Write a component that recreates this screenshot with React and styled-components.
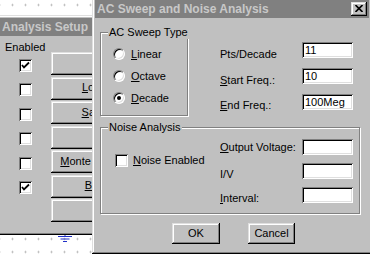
import React from "react";
import styled, { createGlobalStyle } from "styled-components";

const Global = createGlobalStyle`
  html, body { margin: 0; padding: 0; background: #fff; }
  body { font-family: "Liberation Sans", Arial, sans-serif; font-size: 11px; color: #000; }
`;

const Desktop = styled.div`
  position: relative;
  width: 370px;
  height: 254px;
  overflow: hidden;
  background-color: #fff;
  background-image: radial-gradient(circle, #a8a8a8 0.7px, transparent 1.2px);
  background-size: 13px 13px;
  background-position: 6px -1.5px;
`;

const raised = `
  box-shadow: inset -1px -1px #000, inset 1px 1px #dfdfdf, inset -2px -2px #808080, inset 2px 2px #fff;
`;

const Window = styled.div`
  position: absolute;
  left: ${(p) => p.$left}px;
  top: ${(p) => p.$top}px;
  width: ${(p) => p.$w}px;
  height: ${(p) => p.$h}px;
  box-sizing: border-box;
  padding: 3px;
  background: #c0c0c0;
  ${raised}
  display: flex;
  flex-direction: column;
`;

const TitleBar = styled.div`
  height: 18px;
  flex: 0 0 18px;
  background: #808080;
  display: flex;
  align-items: center;
  justify-content: space-between;
  padding: 0 2px 0 2px;
`;

const TitleText = styled.span`
  font-family: "Liberation Sans", Arial, sans-serif;
  font-weight: bold;
  font-size: 12px;
  color: #c8c8c8;
  white-space: nowrap;
  line-height: 18px;
`;

const CloseButton = styled.div`
  width: 16px;
  height: 14px;
  box-sizing: border-box;
  background: #c0c0c0;
  ${raised}
  display: flex;
  align-items: center;
  justify-content: center;
  padding-bottom: 1px;
`;

/* mnemonic text: first letter underlined */
const Text = styled.span`
  display: inline-block;
  line-height: 13px;
  white-space: nowrap;
  &::first-letter {
    text-decoration: ${(p) => (p.$u ? "underline" : "none")};
  }
`;

/* ---------- left window ---------- */

const LeftBody = styled.div`
  display: grid;
  grid-template-columns: 51px 148px;
  grid-template-rows: 14.5px;
  grid-auto-rows: 23px;
  row-gap: 1.5px;
`;

const Header = styled.div`
  grid-column: 1 / -1;
  padding: 5px 0 0 5px;
  line-height: 13px;
  white-space: nowrap;
`;

const CheckCell = styled.div`
  display: flex;
  align-items: center;
  padding: 3px 0 0 19px;
`;

const Check = styled.span`
  display: inline-flex;
  align-items: center;
  justify-content: center;
  width: 13px;
  height: 13px;
  box-sizing: border-box;
  background: #fff;
  box-shadow: inset 1px 1px #808080, inset -1px -1px #fff, inset 2px 2px #000, inset -2px -2px #dfdfdf;
  flex: none;
`;

const PushButton = styled.div`
  box-sizing: border-box;
  width: ${(p) => (p.$w ? `${p.$w}px` : "auto")};
  height: ${(p) => (p.$h ? `${p.$h}px` : "auto")};
  background: #c0c0c0;
  ${raised}
  display: flex;
  align-items: center;
  justify-content: center;
  line-height: 13px;
  white-space: nowrap;
  overflow: hidden;
  padding-bottom: 1px;
`;

/* ---------- dialog ---------- */

const DialogBody = styled.div`
  padding: 14px 0 0 5px;
  display: flex;
  flex-direction: column;
`;

const TopRow = styled.div`
  display: flex;
  align-items: flex-start;
`;

const GroupBox = styled.div`
  position: relative;
  box-sizing: border-box;
  width: ${(p) => p.$w}px;
  height: ${(p) => p.$h}px;
  margin-top: ${(p) => p.$mt || 0}px;
  border: 1px solid #808080;
  box-shadow: inset 1px 1px #fff, 1px 1px #fff;
  display: flex;
`;

const GroupLabel = styled.span`
  position: absolute;
  top: -7px;
  left: 7px;
  padding: 0 1px;
  background: #c0c0c0;
  line-height: 13px;
  white-space: nowrap;
`;

const RadioList = styled.div`
  display: flex;
  flex-direction: column;
  padding: 10px 0 0 12px;
`;

const OptionRow = styled.div`
  display: flex;
  align-items: center;
  gap: ${(p) => p.$gap}px;
  height: ${(p) => p.$h}px;
`;

const Radio = styled.span`
  position: relative;
  width: 12px;
  height: 12px;
  box-sizing: border-box;
  border-radius: 50%;
  background: #fff;
  border: 1px solid;
  border-color: #808080 #fff #fff #808080;
  box-shadow: inset 1px 1px 0 #000, inset -1px -1px 0 #dfdfdf;
  flex: none;
  &::after {
    content: "";
    display: ${(p) => (p.$on ? "block" : "none")};
    position: absolute;
    left: 3px;
    top: 3px;
    width: 4px;
    height: 4px;
    border-radius: 50%;
    background: #000;
  }
`;

const FieldList = styled.div`
  display: flex;
  flex-direction: column;
  gap: ${(p) => p.$gap}px;
  padding-top: ${(p) => p.$pt}px;
  margin-left: ${(p) => p.$ml || 0}px;
`;

const FieldRow = styled.div`
  display: flex;
  align-items: flex-start;
`;

const FieldLabel = styled.div`
  width: 82px;
  height: 16px;
  padding-top: ${(p) => p.$drop}px;
  box-sizing: border-box;
`;

const TextField = styled.div`
  width: 51px;
  height: 16px;
  box-sizing: border-box;
  background: #fff;
  box-shadow: inset 1px 1px #808080, inset -1px -1px #fff, inset 2px 2px #000, inset -2px -2px #dfdfdf;
  padding: 2px 0 0 3px;
  line-height: 13px;
  white-space: nowrap;
`;

const NoiseLeft = styled.div`
  width: 119px;
  padding: 26px 0 0 14px;
  box-sizing: border-box;
`;

const ButtonRow = styled.div`
  display: flex;
  gap: 28px;
  padding: 9px 0 0 72px;
`;

const Ground = styled.svg`
  position: absolute;
  left: 57px;
  top: 228px;
`;

const Tick = () => (
  <svg width="9" height="9" viewBox="0 0 9 9">
    <path d="M1 4 L3 6.5 L8 1.5" fill="none" stroke="#000" strokeWidth="1.8" />
  </svg>
);

const leftRows = [
  { label: "AC Sweep...", checked: true, box: true },
  { label: "Load Bias Point...", box: true },
  { label: "Save Bias Point...", box: true },
  { label: "DC Sweep...", box: true },
  { label: "Monte Carlo/Worst Case...", box: true },
  { label: "Bias Point Detail", checked: true, box: true },
  { label: "", box: false },
];

const radios = [
  { label: "Linear" },
  { label: "Octave" },
  { label: "Decade", on: true },
];

const sweepFields = [
  { label: "Pts/Decade", u: false, value: "11", drop: 6 },
  { label: "Start Freq.:", u: true, value: "10", drop: 6 },
  { label: "End Freq.:", u: true, value: "100Meg", drop: 5 },
];

const noiseFields = [
  { label: "Output Voltage:", u: true, drop: 2 },
  { label: "I/V", u: false, drop: 5 },
  { label: "Interval:", u: true, drop: 5 },
];

export default function App() {
  return (
    <>
      <Global />
      <Desktop>
        <Ground width="16" height="16" viewBox="0 0 16 16">
          <circle cx="3" cy="1" r="0.6" fill="#e8e070" />
          <circle cx="13" cy="1" r="0.6" fill="#e8e070" />
          <path d="M8 1 V8 M1 8.5 H15 M3.5 11 H12.5 M6 13.5 H10" stroke="#2030c8" strokeWidth="1" fill="none" />
        </Ground>

        <Window $left={-3} $top={15} $w={230} $h={220}>
          <TitleBar>
            <TitleText>Analysis Setup</TitleText>
          </TitleBar>
          <LeftBody>
            <Header>Enabled</Header>
            {leftRows.map((r, i) => (
              <React.Fragment key={i}>
                <CheckCell>{r.box && <Check>{r.checked && <Tick />}</Check>}</CheckCell>
                <PushButton>{r.label && <Text $u>{r.label}</Text>}</PushButton>
              </React.Fragment>
            ))}
          </LeftBody>
        </Window>

        <Window $left={92} $top={-3} $w={280} $h={257}>
          <TitleBar>
            <TitleText>AC Sweep and Noise Analysis</TitleText>
            <CloseButton>
              <svg width="8" height="7" viewBox="0 0 8 7">
                <path d="M0.5 0 L7.5 7 M7.5 0 L0.5 7" stroke="#000" strokeWidth="1.6" />
              </svg>
            </CloseButton>
          </TitleBar>
          <DialogBody>
            <TopRow>
              <GroupBox $w={88} $h={84}>
                <GroupLabel>AC Sweep Type</GroupLabel>
                <RadioList>
                  {radios.map((r) => (
                    <OptionRow key={r.label} $gap={6} $h={22}>
                      <Radio $on={r.on} />
                      <Text $u>{r.label}</Text>
                    </OptionRow>
                  ))}
                </RadioList>
              </GroupBox>
              <FieldList $gap={10} $pt={10} $ml={32}>
                {sweepFields.map((f) => (
                  <FieldRow key={f.label}>
                    <FieldLabel $drop={f.drop}>
                      <Text $u={f.u}>{f.label}</Text>
                    </FieldLabel>
                    <TextField>{f.value}</TextField>
                  </FieldRow>
                ))}
              </FieldList>
            </TopRow>

            <GroupBox $w={260} $h={87} $mt={11}>
              <GroupLabel>Noise Analysis</GroupLabel>
              <NoiseLeft>
                <OptionRow $gap={5} $h={13}>
                  <Check />
                  <Text $u>Noise Enabled</Text>
                </OptionRow>
              </NoiseLeft>
              <FieldList $gap={8} $pt={11}>
                {noiseFields.map((f) => (
                  <FieldRow key={f.label}>
                    <FieldLabel $drop={f.drop}>
                      <Text $u={f.u}>{f.label}</Text>
                    </FieldLabel>
                    <TextField />
                  </FieldRow>
                ))}
              </FieldList>
            </GroupBox>

            <ButtonRow>
              <PushButton $w={48} $h={21}>OK</PushButton>
              <PushButton $w={47} $h={21}>Cancel</PushButton>
            </ButtonRow>
          </DialogBody>
        </Window>
      </Desktop>
    </>
  );
}
